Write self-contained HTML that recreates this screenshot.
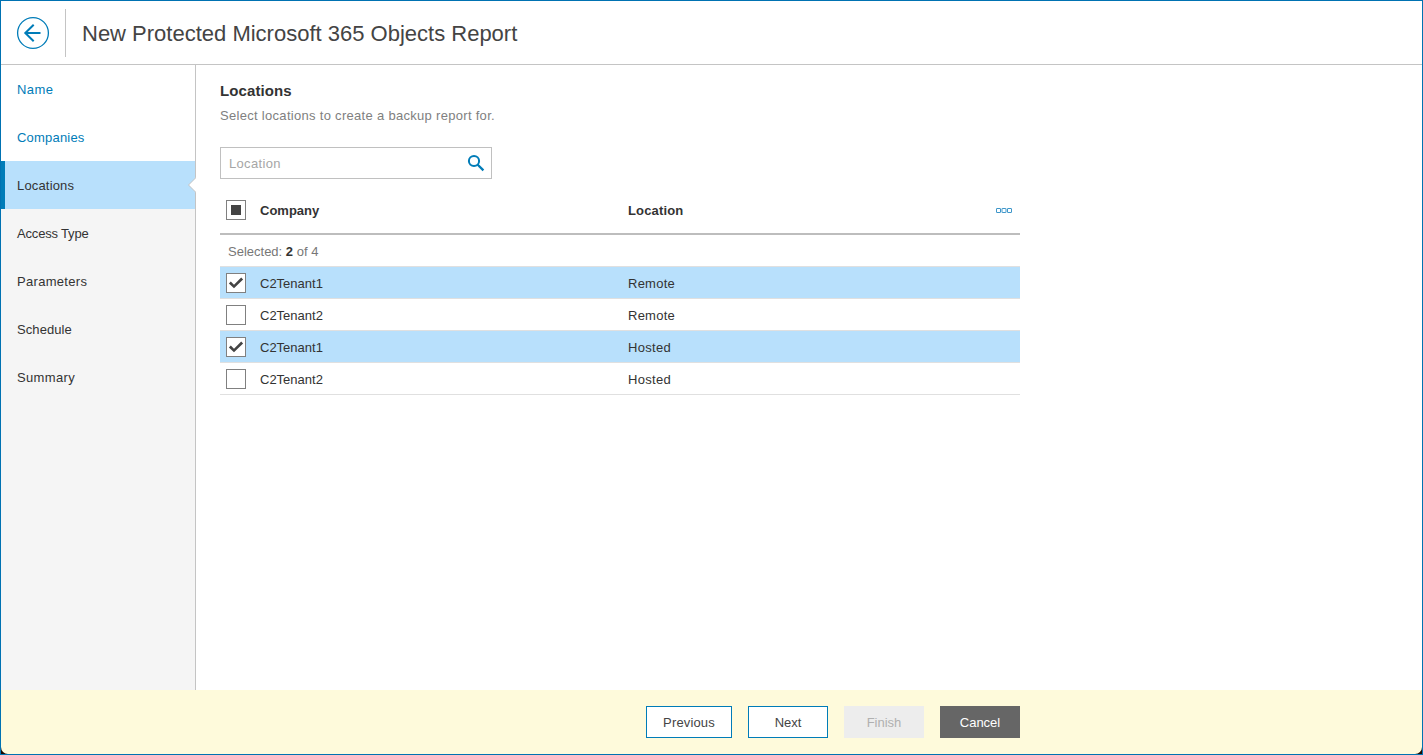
<!DOCTYPE html>
<html lang="en">
<head>
<meta charset="utf-8">
<title>New Protected Microsoft 365 Objects Report</title>
<style>
*{box-sizing:border-box;margin:0;padding:0}
html,body{width:1423px;height:755px;overflow:hidden;background:#fff}
body{font-family:"Liberation Sans","DejaVu Sans",sans-serif;font-size:13px;color:#444;position:relative}
.abs{position:absolute}
#frame{position:absolute;left:0;top:0;width:1423px;height:755px;border:1px solid #0072b2;pointer-events:none;z-index:50}
#hdr{position:absolute;left:0;top:0;width:1423px;height:65px;background:#fff;border-bottom:1px solid #c4c4c4}
#back{position:absolute;left:16px;top:16px;width:34px;height:34px}
#vdiv{position:absolute;left:65px;top:9px;width:1px;height:48px;background:#c4c4c4}
#title{position:absolute;left:82px;top:15px;height:38px;line-height:38px;font-size:22px;color:#444;white-space:nowrap;letter-spacing:0}
#side{position:absolute;left:0;top:65px;width:196px;height:625px;background:#f5f5f5;border-right:1px solid #c4c4c4}
#side .it{position:absolute;left:0;width:195px;height:48px;line-height:50px;overflow:hidden;padding-left:17px;font-size:13px;color:#333;white-space:nowrap}
#side .done{background:#fff;color:#007cb8}
#side .cur{background:#b8e0fc;color:#333}
#side .cur:before{content:"";position:absolute;left:0;top:0;width:5px;height:48px;background:#007cb8}
#main{position:absolute;left:196px;top:65px;width:1227px;height:625px;background:#fff}
#h1{position:absolute;left:220px;top:80px;height:22px;line-height:22px;font-size:15px;font-weight:bold;color:#333;white-space:nowrap;letter-spacing:0.1px}
#sub{position:absolute;left:220px;top:105px;height:22px;line-height:22px;font-size:13px;color:#808080;white-space:nowrap;letter-spacing:0.3px}
#search{position:absolute;left:220px;top:147px;width:272px;height:32px;border:1px solid #c0c0c0;background:#fff}
#search span{position:absolute;left:8px;top:1px;letter-spacing:0.33px;height:30px;line-height:30px;color:#a6a6a6;font-size:13px}
#search svg{position:absolute;left:245px;top:5px}
.cb{position:absolute;left:226px;width:20px;height:20px;border:1px solid #808080;background:#fff}
.th{position:absolute;top:200px;height:22px;line-height:22px;font-weight:bold;font-size:13px;color:#333;white-space:nowrap}
#hline{position:absolute;left:220px;top:233px;width:800px;height:2px;background:#bdbdbd}
#sel{position:absolute;left:228px;top:241px;height:22px;line-height:22px;font-size:13px;color:#777;white-space:nowrap}
#sel b{color:#333}
.row{position:absolute;left:220px;width:800px;height:32px;border-top:1px solid #e0e0e0;background:#fff}
.row.on{background:#b8e0fc}
.row .c{position:absolute;top:1px;height:31px;line-height:31px;font-size:13px;color:#333;white-space:nowrap}
.row .c1{left:40px}
.row .c2{left:408px}
.row .cb{left:6px;top:6px}
#foot{position:absolute;left:0;top:690px;width:1423px;height:65px;background:#fefadb}
.btn{position:absolute;top:706px;height:32px;line-height:32px;overflow:hidden;text-align:center;font-size:13px;border:1px solid #007cb8;background:#fff;color:#444;white-space:nowrap}
.btn.dis{background:#ededed;border-color:#ededed;color:#b0b0b0}
.btn.dark{background:#666;border-color:#666;color:#fff}
</style>
</head>
<body>
<div id="hdr">
  <svg id="back" width="34" height="34" viewBox="0 0 34 34">
    <circle cx="17" cy="17" r="15.4" fill="#fff" stroke="#007cb8" stroke-width="1.3"/>
    <path d="M24.5 17 H9.5 M17.7 8.8 L9.3 17 L17.7 25.2" fill="none" stroke="#007cb8" stroke-width="2" stroke-linecap="butt" stroke-linejoin="miter"/>
  </svg>
  <div id="vdiv"></div>
  <div id="title">New Protected Microsoft 365 Objects Report</div>
</div>

<div id="side">
  <div class="it done" style="top:0;letter-spacing:0.42px">Name</div>
  <div class="it done" style="top:48px;letter-spacing:0.2px">Companies</div>
  <div class="it cur" style="top:96px;letter-spacing:0.17px">Locations</div>
  <div class="it" style="top:144px;letter-spacing:-0.18px">Access Type</div>
  <div class="it" style="top:192px;letter-spacing:0.3px">Parameters</div>
  <div class="it" style="top:240px;letter-spacing:0.08px">Schedule</div>
  <div class="it" style="top:288px;letter-spacing:0.35px">Summary</div>
</div>

<div id="main"></div>
<svg class="abs" style="left:186px;top:175px" width="12" height="20" viewBox="0 0 12 20"><path d="M10 2.6 L2.6 10 L10 17.4 Z" fill="#fff"/><path d="M9.5 3 L2.5 10 L9.5 17" fill="none" stroke="#c4c4c4" stroke-width="1"/></svg>

<div id="h1">Locations</div>
<div id="sub">Select locations to create a backup report for.</div>

<div id="search">
  <span>Location</span>
  <svg width="20" height="20" viewBox="0 0 20 20"><circle cx="8" cy="8" r="5.1" fill="none" stroke="#007cb8" stroke-width="2"/><path d="M11.5 11.5 L17.4 17.4" stroke="#007cb8" stroke-width="2.3" stroke-linecap="butt"/></svg>
</div>

<div class="cb" style="top:200px"><div class="abs" style="left:4px;top:4px;width:10px;height:10px;background:#444"></div></div>
<div class="th" style="left:260px">Company</div>
<div class="th" style="left:628px;letter-spacing:0.15px">Location</div>
<svg class="abs" style="left:996px;top:207px" width="16" height="7" viewBox="0 0 16 7">
  <rect x="0.5" y="1.5" width="4" height="4" rx="0.3" fill="none" stroke="#2a8cc4" stroke-opacity="0.9"/>
  <rect x="6" y="1.5" width="4" height="4" rx="0.3" fill="none" stroke="#2a8cc4" stroke-opacity="0.9"/>
  <rect x="11.5" y="1.5" width="4" height="4" rx="0.3" fill="none" stroke="#2a8cc4" stroke-opacity="0.9"/>
</svg>
<div id="hline"></div>
<div id="sel">Selected: <b>2</b> of 4</div>

<div class="row on" style="top:266px"><div class="cb"><svg width="18" height="18" viewBox="0 0 18 18"><path d="M1.9 9.4 L3.8 7.6 L7 10.7 L14.2 3.6 L16.1 5.4 L7 14.3 Z" fill="#444"/></svg></div><div class="c c1">C2Tenant1</div><div class="c c2" style="letter-spacing:0.25px">Remote</div></div>
<div class="row" style="top:298px"><div class="cb"></div><div class="c c1">C2Tenant2</div><div class="c c2" style="letter-spacing:0.25px">Remote</div></div>
<div class="row on" style="top:330px"><div class="cb"><svg width="18" height="18" viewBox="0 0 18 18"><path d="M1.9 9.4 L3.8 7.6 L7 10.7 L14.2 3.6 L16.1 5.4 L7 14.3 Z" fill="#444"/></svg></div><div class="c c1">C2Tenant1</div><div class="c c2" style="letter-spacing:0.33px">Hosted</div></div>
<div class="row" style="top:362px"><div class="cb"></div><div class="c c1">C2Tenant2</div><div class="c c2" style="letter-spacing:0.33px">Hosted</div></div>

<div class="abs" style="left:220px;top:394px;width:800px;height:1px;background:#e0e0e0"></div>

<div id="foot"></div>
<div class="btn" style="left:646px;width:86px;letter-spacing:0.15px">Previous</div>
<div class="btn" style="left:748px;width:80px">Next</div>
<div class="btn dis" style="left:844px;width:80px">Finish</div>
<div class="btn dark" style="left:940px;width:80px">Cancel</div>

<svg class="abs" style="left:1px;top:747px;z-index:51" width="7" height="7" viewBox="0 0 7 7"><path d="M0 0 A7 7 0 0 0 7 7 L0 7 Z" fill="#1c0a00"/></svg>
<svg class="abs" style="left:1415px;top:747px;z-index:51" width="7" height="7" viewBox="0 0 7 7"><path d="M7 0 A7 7 0 0 1 0 7 L7 7 Z" fill="#1c0a00"/></svg>
<div id="frame"></div>
</body>
</html>
